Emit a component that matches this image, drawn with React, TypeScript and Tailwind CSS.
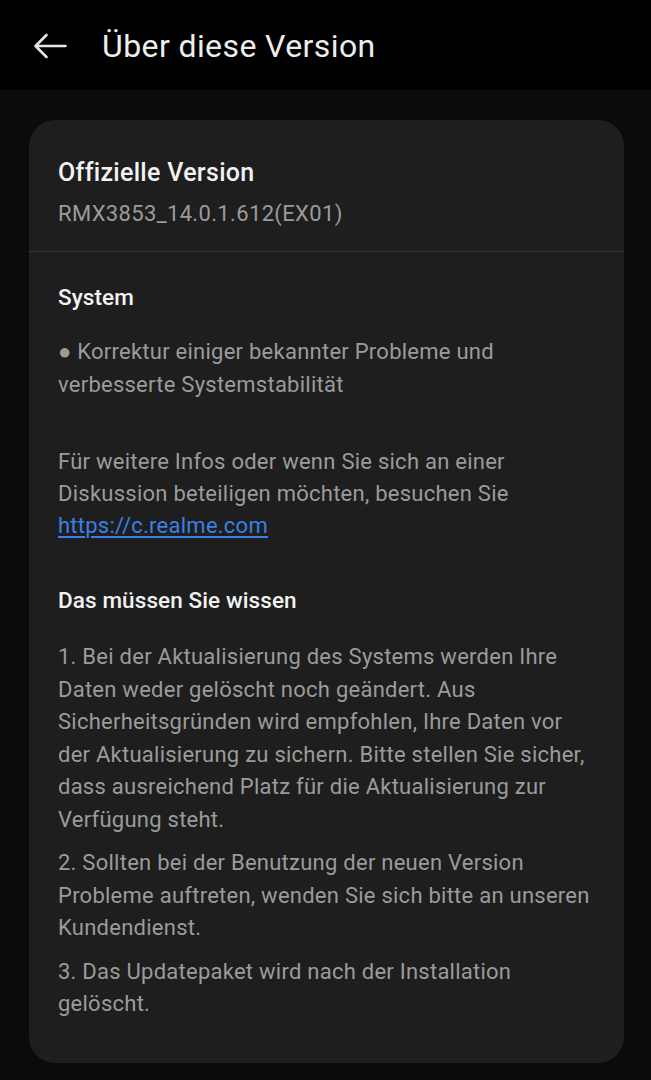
import React from "react";

export default function App() {
  const font = { fontFamily: "Roboto, 'Noto Sans', sans-serif" };
  return (
    <div className="min-h-[1080px] w-[651px] bg-[#0b0b0b]" style={font}>
      <div className="flex h-[90px] items-center bg-black">
        <svg className="ml-[33px] mt-[2px]" width="34" height="26" viewBox="0 0 34 26" fill="none">
          <path d="M2.5 13 H32.5 M2.5 13 L13.5 2 M2.5 13 L13.5 24" stroke="#e6e6e6" strokeWidth="2.6" strokeLinecap="round" strokeLinejoin="round" />
        </svg>
        <div className="ml-[35px] mt-[2px] text-[32px] leading-[36px] tracking-[0.4px] text-[#ededed]">Über diese Version</div>
      </div>
      <div className="pl-[29px] pr-[27px] pt-[30px] pb-[18px]">
        <div className="rounded-[26px] bg-[#1e1e1e]">
          <div className="px-[29px] pt-[37px] pb-[21px]">
            <div className="text-[25px] leading-[32px] font-medium tracking-[0.3px] text-[#f2f2f2]">Offizielle Version</div>
            <div className="mt-[9px] text-[22px] leading-[32px] tracking-[0.35px] text-[#9b9b9b]">RMX3853_14.0.1.612(EX01)</div>
          </div>
          <div className="h-px bg-[#383838]" />
          <div className="pl-[29px] pr-[24px] pt-[29px] pb-[42px] text-[22px] leading-[32.5px] tracking-[0.25px] text-[#9b9b9b]">
            <div className="text-[22.5px] font-medium leading-[32px] tracking-[0.1px] text-[#f2f2f2]">System</div>
            <p className="mt-[23px]">● Korrektur einiger bekannter Probleme und verbesserte Systemstabilität</p>
            <p className="mt-[45px] leading-[32px]">
              Für weitere Infos oder wenn Sie sich an einer Diskussion beteiligen möchten, besuchen Sie{" "}
              <span className="text-[#3a80e6] underline underline-offset-[3px]">https://c.realme.com</span>
            </p>
            <div className="mt-[42px] text-[22.5px] font-medium leading-[32px] tracking-[0.1px] text-[#f2f2f2]">Das müssen Sie wissen</div>
            <p className="mt-[25px]">
              1. Bei der Aktualisierung des Systems werden Ihre Daten weder gelöscht noch geändert. Aus Sicherheitsgründen wird empfohlen, Ihre Daten vor der Aktualisierung zu sichern. Bitte stellen Sie sicher, dass ausreichend Platz für die Aktualisierung zur Verfügung steht.
            </p>
            <p className="mt-[11px]">
              2. Sollten bei der Benutzung der neuen Version Probleme auftreten, wenden Sie sich bitte an unseren Kundendienst.
            </p>
            <p className="mt-[11px]">3. Das Updatepaket wird nach der Installation gelöscht.</p>
          </div>
        </div>
      </div>
    </div>
  );
}
